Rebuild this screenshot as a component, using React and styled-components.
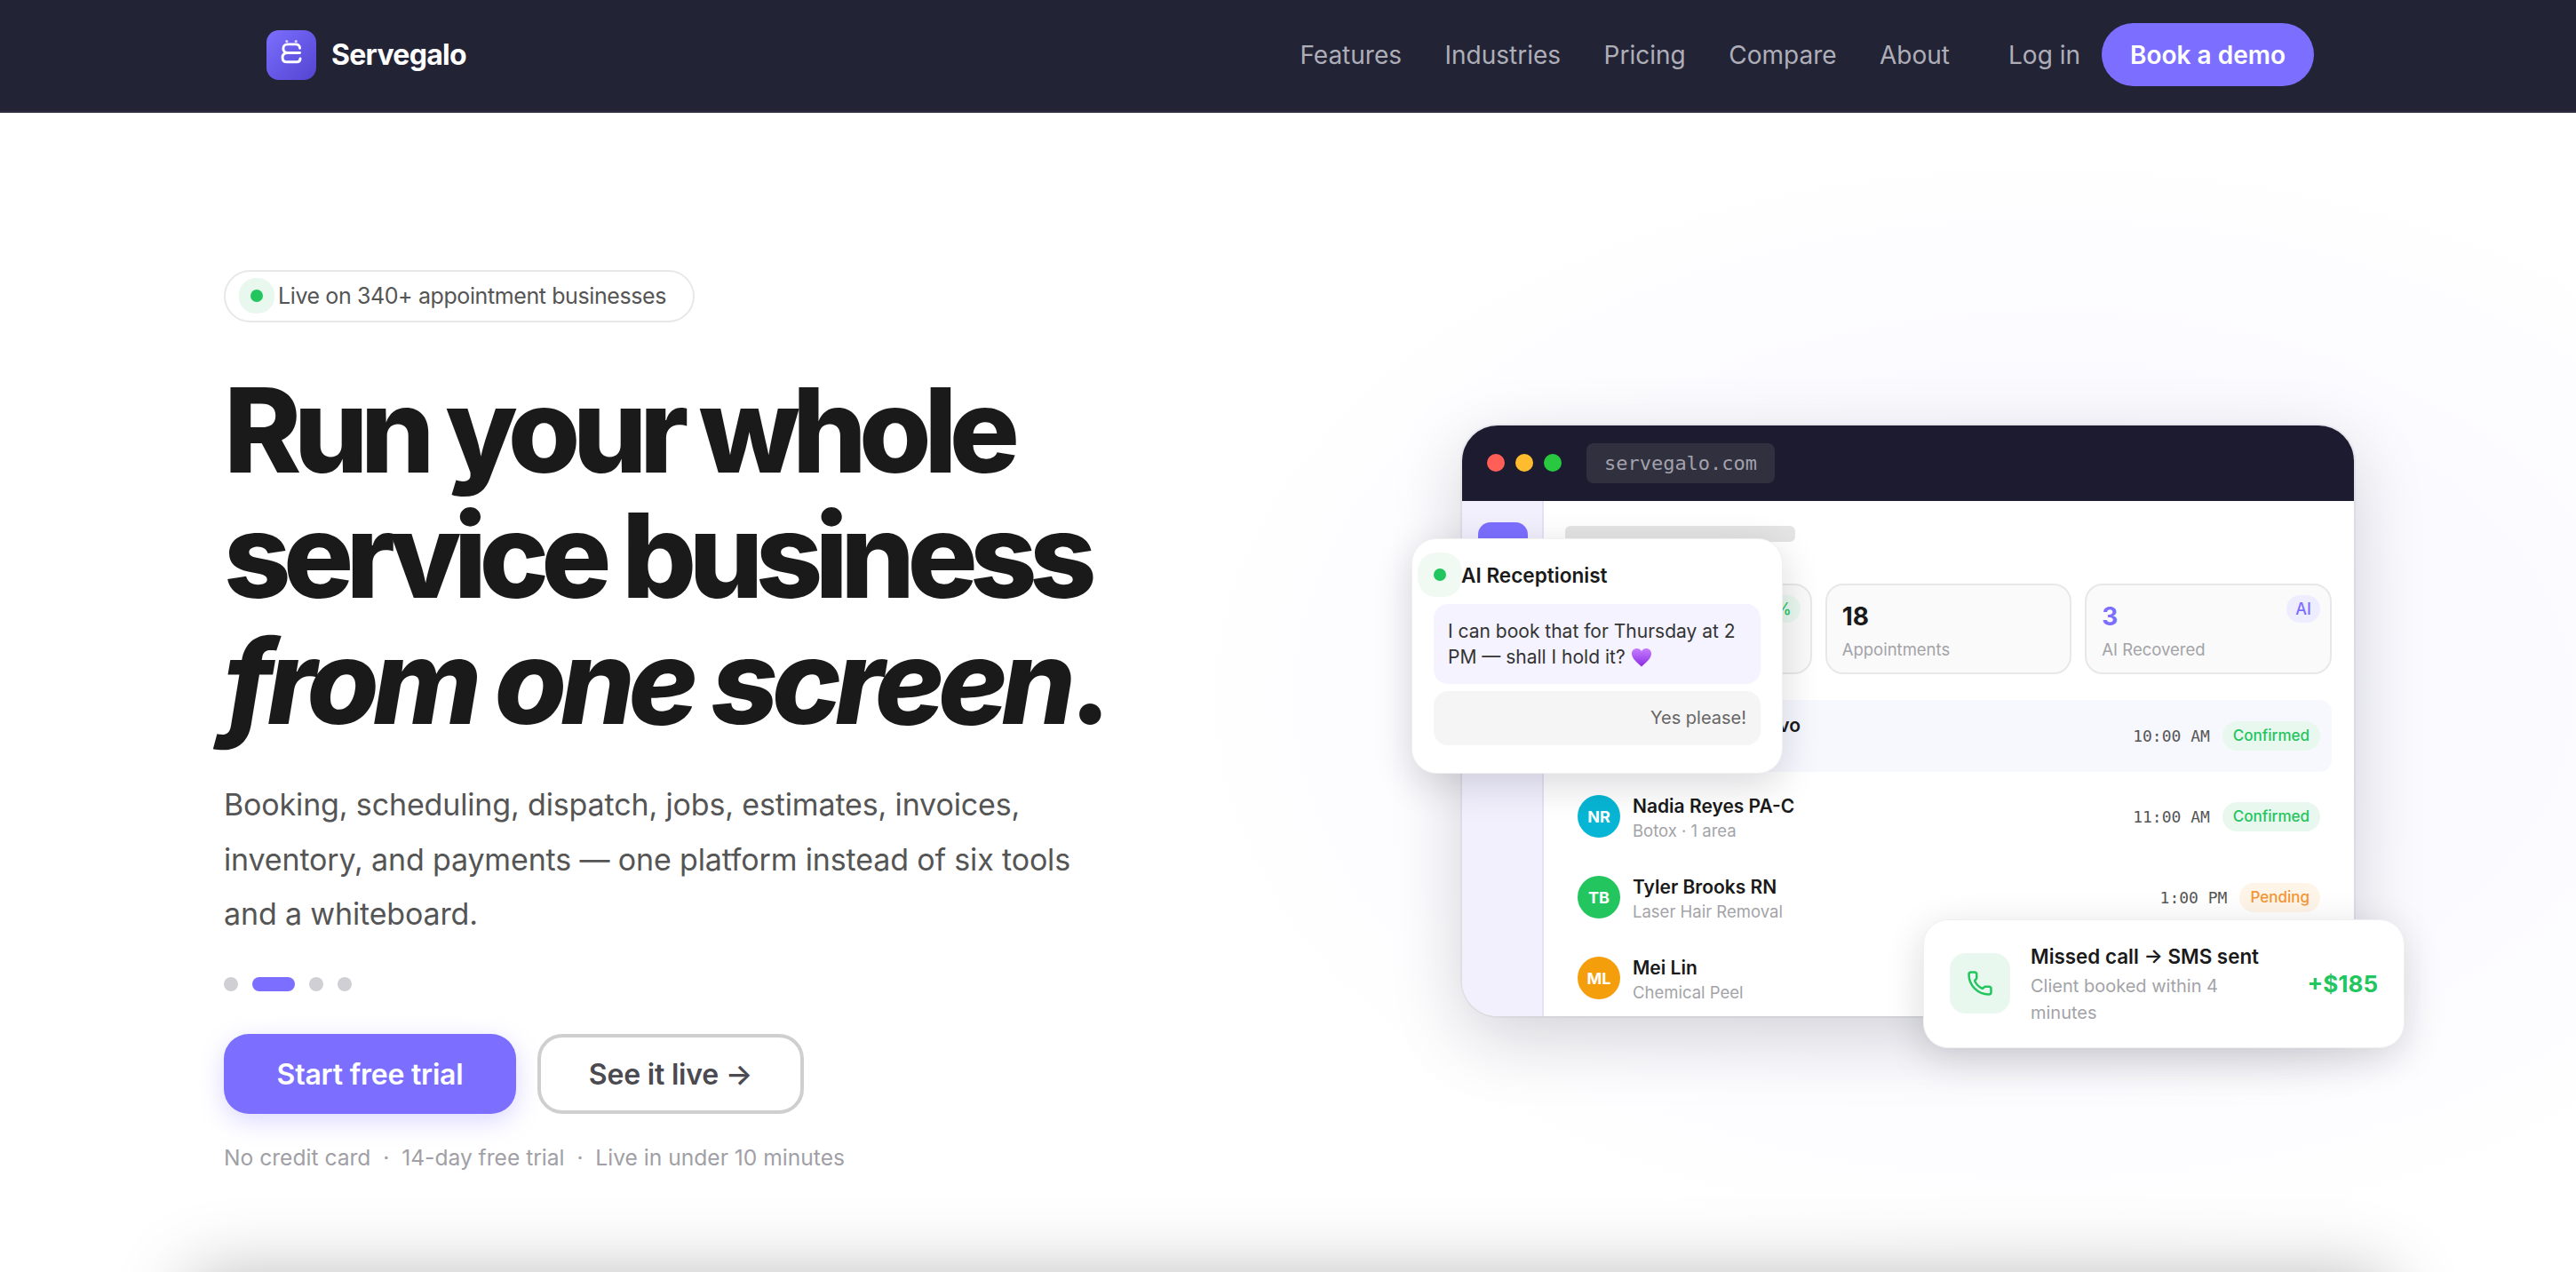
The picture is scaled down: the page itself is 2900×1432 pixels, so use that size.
import React from 'react';
import styled, { createGlobalStyle } from 'styled-components';
import { Phone } from 'lucide-react';

const GlobalStyle = createGlobalStyle`
  html, body {
    margin: 0;
    padding: 0;
    background: #ffffff;
  }
  body {
    font-family: 'Inter', 'Liberation Sans', sans-serif;
    color: #1a1a1a;
  }
  * { box-sizing: border-box; }
`;

const Page = styled.div`
  height: 100vh;
  overflow: hidden;
  background: #ffffff;
`;

// Nav
const Nav = styled.header`
  height: 127px;
  padding: 0 295px 2px 300px;
  display: flex;
  align-items: center;
  justify-content: space-between;
  background: #232336;
  border-bottom: 2px solid #2e2e42;
`;

const Brand = styled.div`
  display: flex;
  align-items: center;
  gap: 17px;
`;

const LogoMark = styled.div`
  width: 56px;
  height: 56px;
  padding-bottom: 6px;
  border-radius: 14px;
  display: flex;
  align-items: center;
  justify-content: center;
  background: linear-gradient(135deg, #7c6fff 0%, #5344d0 100%);
`;

const BrandName = styled.span`
  font-size: 32px;
  font-weight: 700;
  letter-spacing: -0.7px;
  color: #ffffff;
`;

const NavRight = styled.nav`
  display: flex;
  align-items: center;
`;

const NavLinks = styled.div`
  display: flex;
  align-items: center;
  gap: 48.5px;
  margin-right: 66px;
`;

const NavLink = styled.a`
  font-size: 28px;
  font-weight: 400;
  color: #aeaeb8;
`;

const DemoButton = styled.a`
  margin-left: 24px;
  height: 71px;
  padding: 0 32px;
  display: flex;
  align-items: center;
  border-radius: 36px;
  background: #7c6fff;
  color: #ffffff;
  font-size: 28px;
  font-weight: 600;
`;

// Hero
const Hero = styled.section`
  position: relative;
  height: 1368px;
  padding: 0 250px 0 252px;
  display: grid;
  grid-template-columns: 1fr 1004px;
  align-items: center;
  background: radial-gradient(ellipse 1000px 640px at 2300px 660px, rgba(124, 111, 255, 0.06) 0%, rgba(124, 111, 255, 0.03) 55%, rgba(124, 111, 255, 0) 100%);
`;

const Copy = styled.div`
  display: flex;
  flex-direction: column;
  align-items: flex-start;
`;

const LivePill = styled.div`
  height: 59px;
  padding: 0 30px 0 28px;
  display: flex;
  align-items: center;
  gap: 17px;
  border: 2px solid #e8e8e8;
  border-radius: 30px;
  background: #ffffff;
  font-size: 25px;
  letter-spacing: -0.4px;
  color: #555555;
`;

const GlowDot = styled.span`
  flex: none;
  width: 14px;
  height: 14px;
  border-radius: 50%;
  background: #22c55e;
  box-shadow: 0 0 0 ${(p) => p.$ring || 13}px ${(p) => p.$ringColor || '#e8f8ee'};
`;

const Headline = styled.h1`
  margin: 51px 0 0;
  font-size: 132px;
  line-height: 141.5px;
  font-weight: 760;
  letter-spacing: -0.066em;
  color: #1a1a1a;
  white-space: nowrap;

  em {
    font-style: italic;
    letter-spacing: -0.055em;
  }
`;

const Lead = styled.p`
  margin: 37px 0 0;
  width: 1000px;
  font-size: 34px;
  line-height: 61.2px;
  letter-spacing: -0.15px;
  color: #555555;
`;

const Pager = styled.div`
  margin-top: 41px;
  display: flex;
  gap: 16px;
`;

const PagerDot = styled.span`
  width: ${(p) => (p.$active ? 48 : 16)}px;
  height: 16px;
  border-radius: 8px;
  background: ${(p) => (p.$active ? '#7c6fff' : '#d0d0d4')};
`;

const Actions = styled.div`
  margin-top: 48px;
  display: flex;
  gap: 24px;
`;

const CtaButton = styled.a`
  height: 90px;
  width: ${(p) => p.$width}px;
  display: flex;
  align-items: center;
  justify-content: center;
  border-radius: 28px;
  font-size: 32px;
  font-weight: 600;
  letter-spacing: -0.2px;
  background: ${(p) => (p.$ghost ? '#ffffff' : '#7c6fff')};
  color: ${(p) => (p.$ghost ? '#4a4a50' : '#ffffff')};
  border: ${(p) => (p.$ghost ? '4px solid #cfcfcf' : 'none')};
  box-shadow: ${(p) => (p.$ghost ? 'none' : '0 8px 28px rgba(124, 111, 255, 0.28)')};
`;

const Fineprint = styled.div`
  margin-top: 34px;
  font-size: 24.6px;
  color: #a0a0a6;
  white-space: pre;
`;

// Browser mock
const Mock = styled.div`
  position: relative;
  height: 665px;
`;

const Frame = styled.div`
  height: 100%;
  display: flex;
  flex-direction: column;
  overflow: hidden;
  border-radius: 40px;
  background: #ffffff;
  box-shadow: 0 0 0 2px rgba(30, 30, 60, 0.05), 0 24px 80px rgba(20, 20, 40, 0.18);
`;

const TitleBar = styled.div`
  flex: none;
  height: 85px;
  padding: 0 28px;
  display: flex;
  align-items: center;
  gap: 12px;
  background: #1c1b30;
`;

const Light = styled.span`
  width: 20px;
  height: 20px;
  border-radius: 50%;
  background: ${(p) => p.$color};
`;

const UrlPill = styled.div`
  margin-left: 16px;
  height: 45px;
  width: 212px;
  display: flex;
  align-items: center;
  justify-content: center;
  border-radius: 8px;
  background: #30303f;
  color: #a2a2ac;
  font-family: 'DejaVu Sans Mono', 'Liberation Mono', monospace;
  font-size: 22px;
`;

const Body = styled.div`
  flex: 1;
  display: flex;
  min-height: 0;
`;

const Sidebar = styled.aside`
  flex: none;
  width: 92px;
  padding: 24px 0 0 18px;
  background: #f2f0fd;
  border-right: 2px solid #e4e2f4;
`;

const SideTile = styled.div`
  width: 56px;
  height: 56px;
  border-radius: 14px;
  background: #7c6fff;
`;

const Main = styled.div`
  flex: 1;
  padding: 28px 25px 0 24px;
`;

const Skeleton = styled.div`
  width: 259px;
  height: 18px;
  border-radius: 6px;
  background: #e4e4e4;
`;

const Stats = styled.div`
  margin-top: 47px;
  display: grid;
  grid-template-columns: repeat(3, 1fr);
  gap: 15px;
`;

const StatCard = styled.div`
  position: relative;
  height: 102px;
  padding: 17px 17px;
  border: 2px solid #e8e8e8;
  border-radius: 20px;
  background: #fafafa;
`;

const StatValue = styled.div`
  font-size: 28px;
  line-height: 36px;
  font-weight: 700;
  color: ${(p) => p.$color || '#1a1a1a'};
`;

const StatLabel = styled.div`
  margin-top: 6px;
  font-size: 18.5px;
  line-height: 26px;
  color: #a3a3a8;
`;

const StatTag = styled.span`
  position: absolute;
  top: 11px;
  right: 11px;
  height: 31px;
  padding: 0 10px;
  display: flex;
  align-items: center;
  border-radius: 16px;
  font-size: 18px;
  font-weight: 500;
  background: ${(p) => p.$bg};
  color: ${(p) => p.$color};
`;

const Rows = styled.div`
  margin-top: 29px;
  display: flex;
  flex-direction: column;
  gap: 10px;
`;

const Row = styled.div`
  flex: none;
  height: 81px;
  padding: 0 13px 0 14px;
  display: flex;
  align-items: center;
  gap: 14px;
  border-radius: 14px;
  background: ${(p) => (p.$active ? '#f7f7fe' : 'transparent')};
`;

const Avatar = styled.div`
  flex: none;
  width: 48px;
  height: 48px;
  border-radius: 50%;
  display: flex;
  align-items: center;
  justify-content: center;
  background: ${(p) => p.$color};
  color: #ffffff;
  font-size: 18px;
  font-weight: 700;
`;

const RowText = styled.div`
  flex: 1;
  min-width: 0;
  padding-top: 4px;
`;

const RowName = styled.div`
  font-size: 21px;
  line-height: 28px;
  font-weight: 600;
  color: #1a1a1a;
  white-space: nowrap;
`;

const RowSub = styled.div`
  margin-top: -1px;
  font-size: 18.5px;
  line-height: 28px;
  color: #a3a3a8;
  white-space: nowrap;
`;

const RowTime = styled.span`
  font-family: 'DejaVu Sans Mono', 'Liberation Mono', monospace;
  font-size: 18px;
  color: #555555;
`;

const Status = styled.span`
  height: 33px;
  padding: 0 12px;
  display: flex;
  align-items: center;
  border-radius: 17px;
  font-size: 17px;
  font-weight: 500;
  background: ${(p) => (p.$pending ? '#fff4e8' : '#e9f8ef')};
  color: ${(p) => (p.$pending ? '#f59532' : '#22c55e')};
`;

// Floating cards
const ChatCard = styled.div`
  position: absolute;
  top: 127px;
  left: -57px;
  width: 418px;
  height: 265px;
  padding: 0 24px;
  border-radius: 28px;
  background: #ffffff;
  border: 1px solid #f0f0f0;
  box-shadow: 0 12px 44px rgba(20, 20, 40, 0.16);
`;

const ChatHead = styled.div`
  height: 73px;
  padding-top: 8px;
  display: flex;
  align-items: center;
  gap: 17px;
  font-size: 22.6px;
  font-weight: 600;
  color: #1a1a1a;
`;

const Bubble = styled.div`
  padding: 16px;
  border-radius: 16px;
  background: #f4f3ff;
  font-size: 21px;
  line-height: 29px;
  color: #333333;

  svg {
    vertical-align: -5px;
  }
`;

const Reply = styled.div`
  margin-top: 8px;
  height: 61px;
  padding: 0 16px;
  display: flex;
  align-items: center;
  justify-content: flex-end;
  border-radius: 16px;
  background: #f5f5f5;
  font-size: 20px;
  color: #666666;
`;

const CallCard = styled.div`
  position: absolute;
  right: -57px;
  bottom: -36px;
  width: 542px;
  height: 145px;
  padding: 0 29px;
  display: flex;
  align-items: center;
  gap: 23px;
  border-radius: 28px;
  background: #ffffff;
  border: 1px solid #f0f0f0;
  box-shadow: 0 12px 44px rgba(20, 20, 40, 0.16);
`;

const CallIcon = styled.div`
  flex: none;
  width: 68px;
  height: 68px;
  border-radius: 18px;
  display: flex;
  align-items: center;
  justify-content: center;
  background: #e9f8ef;
  color: #22c55e;
`;

const CallText = styled.div`
  flex: 1;
  min-width: 0;
  padding-top: 2px;
`;

const CallTitle = styled.div`
  font-size: 22.4px;
  line-height: 32px;
  font-weight: 600;
  color: #1a1a1a;
  white-space: nowrap;
`;

const CallSub = styled.div`
  margin-top: 2px;
  font-size: 20px;
  line-height: 30px;
  color: #a3a3a8;
`;

const CallAmount = styled.div`
  flex: none;
  font-size: 26px;
  font-weight: 700;
  color: #22c55e;
`;

// Next section, only its shadow shows above the fold
const NextSection = styled.section`
  margin: 0 252px;
  height: 400px;
  background: #ffffff;
  box-shadow: 0 -18px 80px 37px rgba(0, 0, 0, 0.3);
`;

const NAV_LINKS = ['Features', 'Industries', 'Pricing', 'Compare', 'About'];

const APPOINTMENTS = [
  { initials: 'CR', color: '#7c6fff', name: 'Dr. Camilla Restivo', sub: 'Lip Filler · Consult', time: '10:00 AM', status: 'Confirmed', active: true },
  { initials: 'NR', color: '#06b6d4', name: 'Nadia Reyes PA-C', sub: 'Botox · 1 area', time: '11:00 AM', status: 'Confirmed' },
  { initials: 'TB', color: '#22c55e', name: 'Tyler Brooks RN', sub: 'Laser Hair Removal', time: '1:00 PM', status: 'Pending' },
  { initials: 'ML', color: '#f59e0b', name: 'Mei Lin', sub: 'Chemical Peel', time: '2:30 PM', status: 'Confirmed' },
];

const LogoGlyph = () => (
  <svg width="26" height="30" viewBox="0 0 30 34" fill="none" stroke="#fff" strokeWidth="3.4" strokeLinecap="round">
    <circle cx="9" cy="2.6" r="1.8" fill="#d9d4ff" stroke="none" />
    <circle cx="21" cy="2.6" r="1.8" fill="#d9d4ff" stroke="none" />
    <path d="M26 11.5C26 8 23.5 6.5 20.5 6.5H10C6.5 6.5 4.5 9 4.5 12C4.5 15 6.5 17.5 10 17.5H26" />
    <path d="M10 17.5C6.5 17.5 3.5 19.5 3.5 23.5C3.5 27.5 6 29.5 9.5 29.5H22C25 29.5 26.5 28 26.5 25" />
  </svg>
);

const PurpleHeart = () => (
  <svg width="24" height="24" viewBox="0 0 24 24">
    <defs>
      <linearGradient id="heartFill" x1="0" y1="0" x2="0" y2="1">
        <stop offset="0%" stopColor="#c77dff" />
        <stop offset="100%" stopColor="#8a2be2" />
      </linearGradient>
    </defs>
    <path fill="url(#heartFill)" d="M12 22.5C7 18 1 13.6 1 7.8 1 4.4 3.6 2 6.6 2 8.9 2 10.9 3.2 12 5.2 13.1 3.2 15.1 2 17.4 2 20.4 2 23 4.4 23 7.8 23 13.6 17 18 12 22.5Z" />
  </svg>
);

const App = () => (
  <Page>
    <GlobalStyle />
    <Nav>
      <Brand>
        <LogoMark>
          <LogoGlyph />
        </LogoMark>
        <BrandName>Servegalo</BrandName>
      </Brand>
      <NavRight>
        <NavLinks>
          {NAV_LINKS.map((link) => (
            <NavLink key={link}>{link}</NavLink>
          ))}
        </NavLinks>
        <NavLink>Log in</NavLink>
        <DemoButton>Book a demo</DemoButton>
      </NavRight>
    </Nav>

    <Hero>
      <Copy>
        <LivePill>
          <GlowDot />
          Live on 340+ appointment businesses
        </LivePill>
        <Headline>
          Run your whole
          <br />
          service business
          <br />
          <em>from one screen</em>.
        </Headline>
        <Lead>
          Booking, scheduling, dispatch, jobs, estimates, invoices, inventory, and payments — one platform instead of six tools and a whiteboard.
        </Lead>
        <Pager>
          <PagerDot />
          <PagerDot $active />
          <PagerDot />
          <PagerDot />
        </Pager>
        <Actions>
          <CtaButton $width={329}>Start free trial</CtaButton>
          <CtaButton $ghost $width={300}>See it live →</CtaButton>
        </Actions>
        <Fineprint>No credit card  ·  14-day free trial  ·  Live in under 10 minutes</Fineprint>
      </Copy>

      <Mock>
        <Frame>
          <TitleBar>
            <Light $color="#ff5f57" />
            <Light $color="#febc2e" />
            <Light $color="#28c840" />
            <UrlPill>servegalo.com</UrlPill>
          </TitleBar>
          <Body>
            <Sidebar>
              <SideTile />
            </Sidebar>
            <Main>
              <Skeleton />
              <Stats>
                <StatCard>
                  <StatValue>$4,280</StatValue>
                  <StatLabel>Revenue</StatLabel>
                  <StatTag $bg="#e9f8ef" $color="#22c55e">+12%</StatTag>
                </StatCard>
                <StatCard>
                  <StatValue>18</StatValue>
                  <StatLabel>Appointments</StatLabel>
                </StatCard>
                <StatCard>
                  <StatValue $color="#7c6fff">3</StatValue>
                  <StatLabel>AI Recovered</StatLabel>
                  <StatTag $bg="#eeecff" $color="#7c6fff">AI</StatTag>
                </StatCard>
              </Stats>
              <Rows>
                {APPOINTMENTS.map((item) => (
                  <Row key={item.name} $active={item.active}>
                    <Avatar $color={item.color}>{item.initials}</Avatar>
                    <RowText>
                      <RowName>{item.name}</RowName>
                      <RowSub>{item.sub}</RowSub>
                    </RowText>
                    <RowTime>{item.time}</RowTime>
                    <Status $pending={item.status === 'Pending'}>{item.status}</Status>
                  </Row>
                ))}
              </Rows>
            </Main>
          </Body>
        </Frame>

        <ChatCard>
          <ChatHead>
            <GlowDot $ring={18} $ringColor="#f0faf3" />
            AI Receptionist
          </ChatHead>
          <Bubble>
            I can book that for Thursday at 2 PM — shall I hold it? <PurpleHeart />
          </Bubble>
          <Reply>Yes please!</Reply>
        </ChatCard>

        <CallCard>
          <CallIcon>
            <Phone size={30} strokeWidth={2} />
          </CallIcon>
          <CallText>
            <CallTitle>Missed call → SMS sent</CallTitle>
            <CallSub>Client booked within 4 minutes</CallSub>
          </CallText>
          <CallAmount>+$185</CallAmount>
        </CallCard>
      </Mock>
    </Hero>

    <NextSection />
  </Page>
);

export default App;
